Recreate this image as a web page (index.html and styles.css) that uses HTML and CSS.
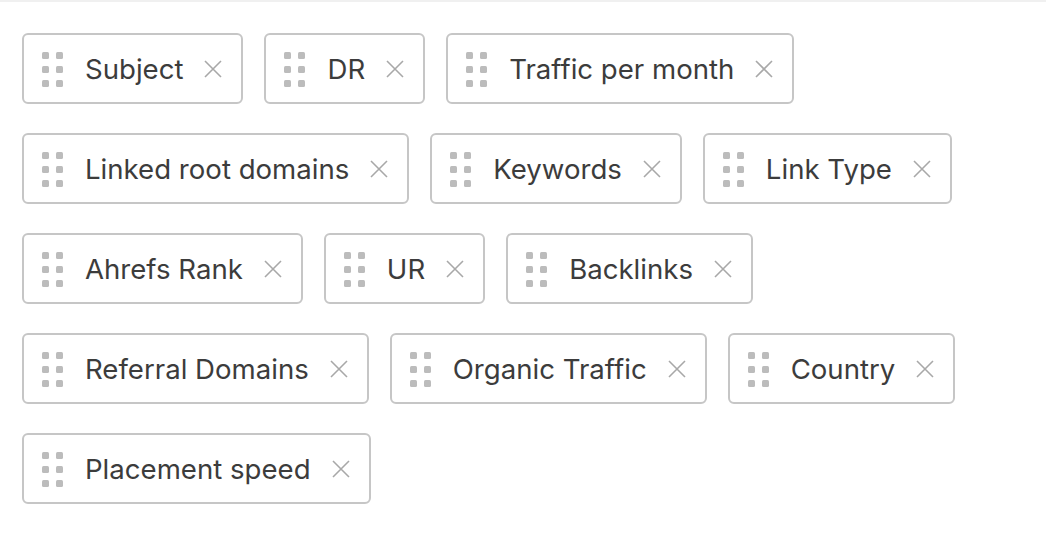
FILE: index.html
```html
<!DOCTYPE html>
<html lang="en">
<head>
  <meta charset="UTF-8">
  <title>Columns</title>
  <link rel="stylesheet" href="styles.css">
</head>
<body>
  <div class="columns">
    <div class="chip"><span class="grip"><i></i><i></i><i></i><i></i><i></i><i></i></span><span class="label">Subject</span><svg class="close" viewBox="0 0 18 18"><path d="M1 1L17 17M17 1L1 17"/></svg></div>
    <div class="chip"><span class="grip"><i></i><i></i><i></i><i></i><i></i><i></i></span><span class="label">DR</span><svg class="close" viewBox="0 0 18 18"><path d="M1 1L17 17M17 1L1 17"/></svg></div>
    <div class="chip"><span class="grip"><i></i><i></i><i></i><i></i><i></i><i></i></span><span class="label">Traffic per month</span><svg class="close" viewBox="0 0 18 18"><path d="M1 1L17 17M17 1L1 17"/></svg></div>
    <div class="chip"><span class="grip"><i></i><i></i><i></i><i></i><i></i><i></i></span><span class="label">Linked root domains</span><svg class="close" viewBox="0 0 18 18"><path d="M1 1L17 17M17 1L1 17"/></svg></div>
    <div class="chip"><span class="grip"><i></i><i></i><i></i><i></i><i></i><i></i></span><span class="label">Keywords</span><svg class="close" viewBox="0 0 18 18"><path d="M1 1L17 17M17 1L1 17"/></svg></div>
    <div class="chip"><span class="grip"><i></i><i></i><i></i><i></i><i></i><i></i></span><span class="label">Link Type</span><svg class="close" viewBox="0 0 18 18"><path d="M1 1L17 17M17 1L1 17"/></svg></div>
    <div class="chip"><span class="grip"><i></i><i></i><i></i><i></i><i></i><i></i></span><span class="label">Ahrefs Rank</span><svg class="close" viewBox="0 0 18 18"><path d="M1 1L17 17M17 1L1 17"/></svg></div>
    <div class="chip"><span class="grip"><i></i><i></i><i></i><i></i><i></i><i></i></span><span class="label">UR</span><svg class="close" viewBox="0 0 18 18"><path d="M1 1L17 17M17 1L1 17"/></svg></div>
    <div class="chip"><span class="grip"><i></i><i></i><i></i><i></i><i></i><i></i></span><span class="label">Backlinks</span><svg class="close" viewBox="0 0 18 18"><path d="M1 1L17 17M17 1L1 17"/></svg></div>
    <div class="chip"><span class="grip"><i></i><i></i><i></i><i></i><i></i><i></i></span><span class="label">Referral Domains</span><svg class="close" viewBox="0 0 18 18"><path d="M1 1L17 17M17 1L1 17"/></svg></div>
    <div class="chip"><span class="grip"><i></i><i></i><i></i><i></i><i></i><i></i></span><span class="label">Organic Traffic</span><svg class="close" viewBox="0 0 18 18"><path d="M1 1L17 17M17 1L1 17"/></svg></div>
    <div class="chip"><span class="grip"><i></i><i></i><i></i><i></i><i></i><i></i></span><span class="label">Country</span><svg class="close" viewBox="0 0 18 18"><path d="M1 1L17 17M17 1L1 17"/></svg></div>
    <div class="chip"><span class="grip"><i></i><i></i><i></i><i></i><i></i><i></i></span><span class="label">Placement speed</span><svg class="close" viewBox="0 0 18 18"><path d="M1 1L17 17M17 1L1 17"/></svg></div>
  </div>
</body>
</html>
```

FILE: styles.css
```css
body {
  margin: 0;
  background: #fff;
  font-family: Inter, "Noto Sans", sans-serif;
  color: #3c3c3c;
  border-top: 2px solid #f0f0f0;
}

.columns {
  display: flex;
  flex-wrap: wrap;
  gap: 29px 21px;
  padding: 31px 22px;
}

.chip {
  display: inline-flex;
  align-items: center;
  box-sizing: border-box;
  height: 71px;
  padding: 0 19px 0 18px;
  border: 2px solid #c6c6c6;
  border-radius: 6px;
  background: #fff;
}

.grip {
  display: grid;
  grid-template-columns: 7px 7px;
  gap: 7px 7px;
  margin: 1px 22px 0 0;
}

.grip i {
  width: 7px;
  height: 7px;
  border-radius: 1.5px;
  background: #bcbcbc;
}

.label {
  font-size: 27.6px;
  line-height: 1;
  padding-top: 2px;
  white-space: nowrap;
}

.close {
  width: 18px;
  height: 18px;
  margin-left: 21px;
  stroke: #a8a8a8;
  stroke-width: 1.6;
  fill: none;
}
```
